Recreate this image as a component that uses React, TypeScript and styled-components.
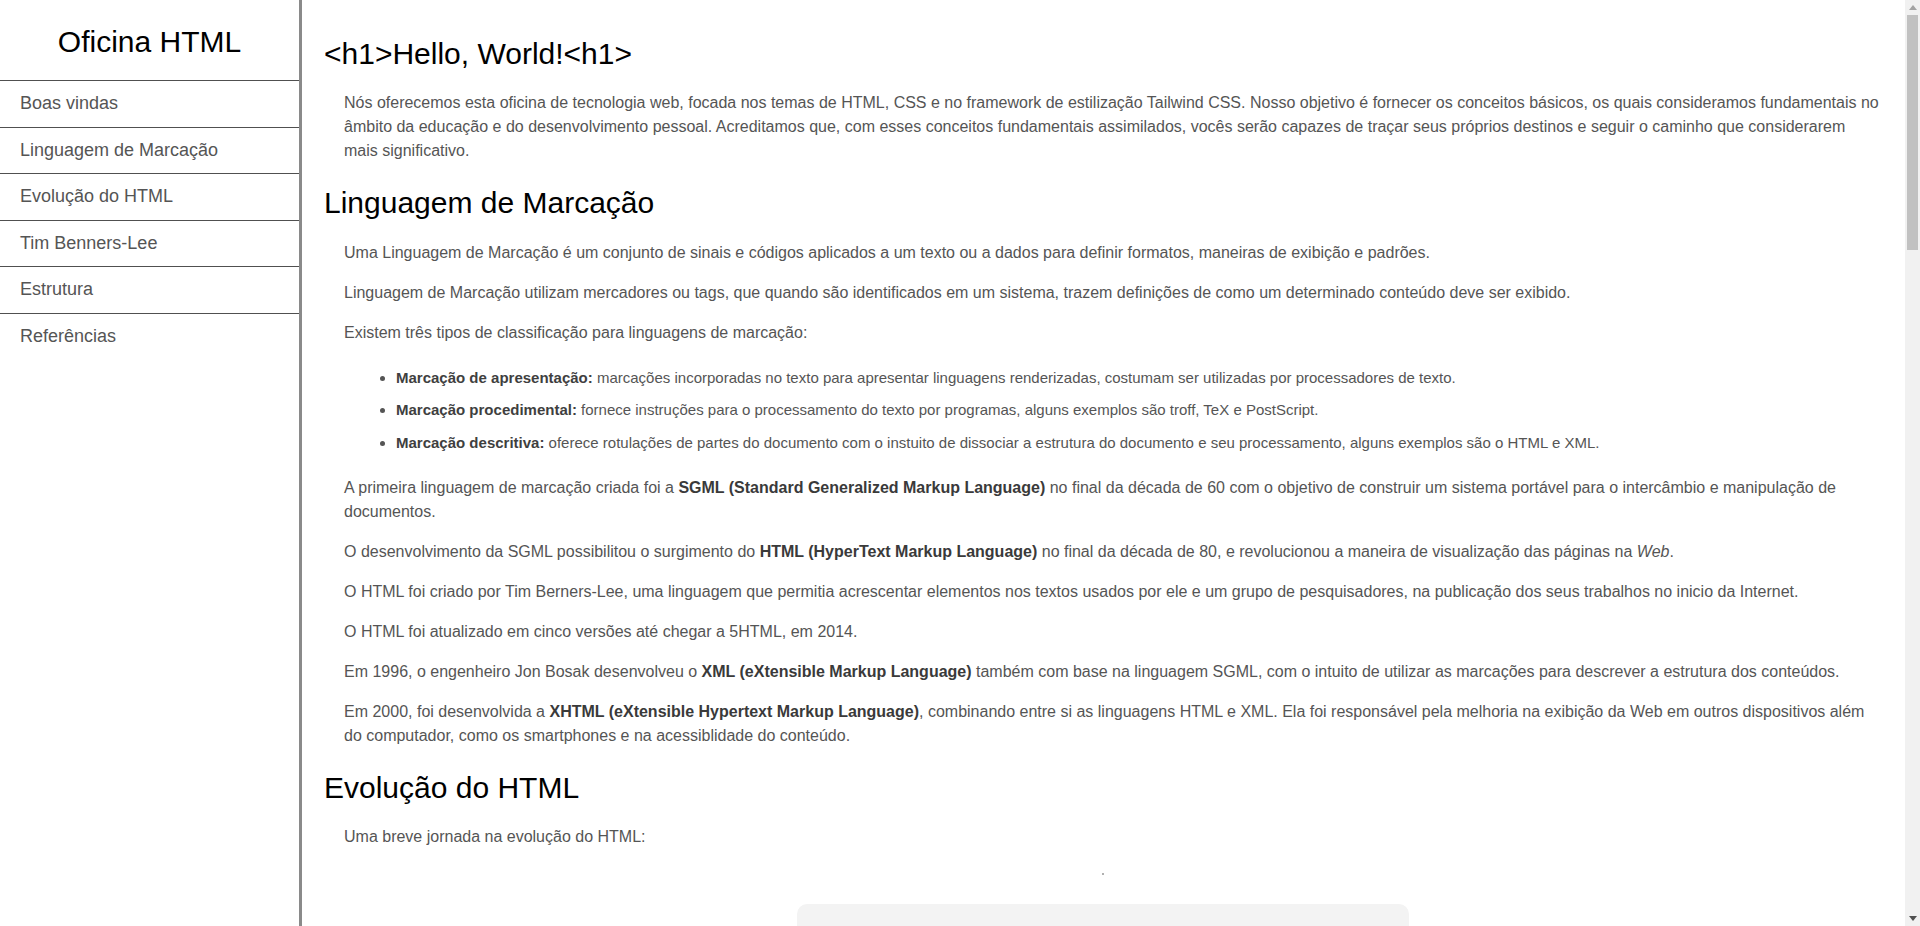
import React, { useEffect, useRef, useState } from "react";
import styled, { createGlobalStyle } from "styled-components";

const GlobalStyle = createGlobalStyle`
  *, *::before, *::after { box-sizing: border-box; }
  html, body { margin: 0; padding: 0; height: 100%; overflow: hidden; }
  body {
    font-family: "Liberation Sans", Arial, Helvetica, sans-serif;
    background: #ffffff;
    color: #555555;
  }
  #root { height: 100%; }
`;

const Layout = styled.div`
  display: flex;
  height: 100vh;
`;

const Sidebar = styled.aside`
  flex: 0 0 302px;
  width: 302px;
  height: 100%;
  border-right: 3px solid #8a8a8a;
  background: #ffffff;
`;

const Brand = styled.div`
  padding: 24px 0 20px;
  font-size: 30px;
  line-height: 36px;
  text-align: center;
  color: #000000;
`;

const Nav = styled.nav`
  display: flex;
  flex-direction: column;
`;

const NavLink = styled.a`
  display: block;
  border-top: 1px solid #505050;
  padding: 9px 20px;
  font-size: 18px;
  line-height: 27.6px;
  color: #555555;
  text-decoration: none;
`;

const Main = styled.main`
  flex: 1;
  min-width: 0;
  height: 100%;
  overflow-y: auto;
  padding: 14px 23px 110px 22px;
  scrollbar-width: none;

  &::-webkit-scrollbar {
    display: none;
  }
`;

const ScrollRail = styled.div`
  flex: 0 0 15px;
  width: 15px;
  height: 100%;
  display: flex;
  flex-direction: column;
  background: #f1f1f1;
`;

const ScrollButton = styled.div`
  flex: 0 0 15px;
  height: 15px;
  display: flex;
  align-items: center;
  justify-content: center;
`;

const ScrollTrack = styled.div`
  flex: 1;
  display: flex;
  flex-direction: column;
  padding: 0 2px;
`;

const ScrollThumb = styled.div`
  flex: 0 0 auto;
  width: 100%;
  background: #c1c1c1;
`;

const Heading = styled.h2`
  margin: 22px 0 19.4px;
  font-size: 30px;
  line-height: 36px;
  font-weight: 400;
  color: #000000;
`;

const Text = styled.p`
  margin: 16px 0 16px 20px;
  font-size: 16px;
  line-height: 24px;
  color: #555555;

  strong {
    color: #3a3a3a;
    font-weight: 700;
  }
`;

const List = styled.ul`
  margin: 21px 0 21px 20px;
  padding-left: 52px;
  list-style: disc;
`;

const Item = styled.li`
  font-size: 15px;
  line-height: 24px;
  color: #555555;

  & + & {
    margin-top: 8.6px;
  }

  strong {
    color: #3f3f3f;
    font-weight: 700;
  }
`;

const Timeline = styled.section`
  margin-top: 16px;
  padding-top: 8px;
  display: flex;
  flex-direction: column;
  align-items: center;
`;

const Dot = styled.span`
  display: block;
  width: 2px;
  height: 2px;
  background: #b0b0b0;
`;

const Card = styled.div`
  margin-top: 29px;
  width: 612px;
  border-radius: 10px;
  background: #f3f3f3;
  padding: 32px 36px;
  display: flex;
  flex-direction: column;
  gap: 18px;
`;

const Year = styled.div`
  font-size: 22px;
  line-height: 30px;
  color: #222222;
  font-weight: 700;
`;

const CardText = styled.p`
  margin: 0;
  font-size: 16px;
  line-height: 24px;
  color: #555555;
`;

const Code = styled.pre`
  margin: 16px 0 16px 20px;
  padding: 16px 20px;
  background: #f3f3f3;
  border-radius: 8px;
  font-family: "Liberation Mono", "Courier New", monospace;
  font-size: 14px;
  line-height: 22px;
  color: #333333;
`;

const navItems = [
  "Boas vindas",
  "Linguagem de Marcação",
  "Evolução do HTML",
  "Tim Benners-Lee",
  "Estrutura",
  "Referências",
];

const timeline = [
  { year: "1991", text: "Tim Berners-Lee publica a primeira descrição do HTML, com 18 elementos." },
  { year: "1993", text: "O navegador Mosaic populariza a Web e a exibição de imagens." },
  { year: "1995", text: "HTML 2.0 é publicado como a primeira especificação padronizada." },
  { year: "1997", text: "HTML 3.2 é publicado pelo W3C, com suporte a tabelas." },
  { year: "1999", text: "HTML 4.01 introduz folhas de estilo e scripts." },
  { year: "2000", text: "XHTML 1.0 combina as linguagens HTML e XML." },
  { year: "2008", text: "Primeiro rascunho público do HTML5." },
  { year: "2014", text: "HTML5 se torna recomendação oficial do W3C." },
  { year: "2016", text: "HTML 5.1 é publicado pelo W3C." },
  { year: "2019", text: "O HTML Living Standard do WHATWG se torna a referência oficial." },
];

const semanticTags = [
  ["<header>", "cabeçalho da página ou de uma seção."],
  ["<nav>", "conjunto de links de navegação."],
  ["<main>", "conteúdo principal do documento."],
  ["<section>", "agrupamento temático de conteúdo."],
  ["<article>", "conteúdo independente e autossuficiente."],
  ["<aside>", "conteúdo relacionado, como barras laterais."],
  ["<footer>", "rodapé da página ou de uma seção."],
];

function Arrow({ up, color }: { up: boolean; color: string }) {
  return (
    <svg width="8" height="5" viewBox="0 0 8 5" aria-hidden="true">
      <polygon points={up ? "4,0 8,5 0,5" : "0,0 8,0 4,5"} fill={color} />
    </svg>
  );
}

export default function App() {
  const mainRef = useRef<HTMLElement>(null);
  const trackRef = useRef<HTMLDivElement>(null);
  const [thumb, setThumb] = useState({ top: 0, height: 234 });

  useEffect(() => {
    const main = mainRef.current;
    const track = trackRef.current;
    if (!main || !track) return;
    const update = () => {
      const trackLen = track.clientHeight;
      const ratio = main.clientHeight / Math.max(main.scrollHeight, 1);
      const height = Math.max(Math.round(trackLen * ratio), 20);
      const max = main.scrollHeight - main.clientHeight;
      const top = max > 0 ? ((trackLen - height) * main.scrollTop) / max : 0;
      setThumb({ top, height });
    };
    update();
    main.addEventListener("scroll", update);
    window.addEventListener("resize", update);
    return () => {
      main.removeEventListener("scroll", update);
      window.removeEventListener("resize", update);
    };
  }, []);

  return (
    <>
      <GlobalStyle />
      <Layout>
        <Sidebar>
          <Brand>Oficina HTML</Brand>
          <Nav>
            {navItems.map((item) => (
              <NavLink key={item} href="#">
                {item}
              </NavLink>
            ))}
          </Nav>
        </Sidebar>
        <Main ref={mainRef}>
          <Heading as="h1">&lt;h1&gt;Hello, World!&lt;h1&gt;</Heading>
          <Text>
            Nós oferecemos esta oficina de tecnologia web, focada nos temas de HTML, CSS e no framework de
            estilização Tailwind CSS. Nosso objetivo é fornecer os conceitos básicos, os quais consideramos
            fundamentais no âmbito da educação e do desenvolvimento pessoal. Acreditamos que, com esses conceitos
            fundamentais assimilados, vocês serão capazes de traçar seus próprios destinos e seguir o caminho que
            considerarem mais significativo.
          </Text>

          <Heading>Linguagem de Marcação</Heading>
          <Text>
            Uma Linguagem de Marcação é um conjunto de sinais e códigos aplicados a um texto ou a dados para definir
            formatos, maneiras de exibição e padrões.
          </Text>
          <Text>
            Linguagem de Marcação utilizam mercadores ou tags, que quando são identificados em um sistema, trazem
            definições de como um determinado conteúdo deve ser exibido.
          </Text>
          <Text>Existem três tipos de classificação para linguagens de marcação:</Text>
          <List>
            <Item>
              <strong>Marcação de apresentação:</strong> marcações incorporadas no texto para apresentar linguagens
              renderizadas, costumam ser utilizadas por processadores de texto.
            </Item>
            <Item>
              <strong>Marcação procedimental:</strong> fornece instruções para o processamento do texto por
              programas, alguns exemplos são troff, TeX e PostScript.
            </Item>
            <Item>
              <strong>Marcação descritiva:</strong> oferece rotulações de partes do documento com o instuito de
              dissociar a estrutura do documento e seu processamento, alguns exemplos são o HTML e XML.
            </Item>
          </List>
          <Text>
            A primeira linguagem de marcação criada foi a <strong>SGML (Standard Generalized Markup Language)</strong>{" "}
            no final da década de 60 com o objetivo de construir um sistema portável para o intercâmbio e manipulação
            de documentos.
          </Text>
          <Text>
            O desenvolvimento da SGML possibilitou o surgimento do <strong>HTML (HyperText Markup Language)</strong> no
            final da década de 80, e revolucionou a maneira de visualização das páginas na <em>Web</em>.
          </Text>
          <Text>
            O HTML foi criado por Tim Berners-Lee, uma linguagem que permitia acrescentar elementos nos textos usados
            por ele e um grupo de pesquisadores, na publicação dos seus trabalhos no inicio da Internet.
          </Text>
          <Text>O HTML foi atualizado em cinco versões até chegar a 5HTML, em 2014.</Text>
          <Text>
            Em 1996, o engenheiro Jon Bosak desenvolveu o <strong>XML (eXtensible Markup Language)</strong> também com
            base na linguagem SGML, com o intuito de utilizar as marcações para descrever a estrutura dos conteúdos.
          </Text>
          <Text>
            Em 2000, foi desenvolvida a <strong>XHTML (eXtensible Hypertext Markup Language)</strong>, combinando entre
            si as linguagens HTML e XML. Ela foi responsável pela melhoria na exibição da Web em outros dispositivos
            além do computador, como os smartphones e na acessiblidade do conteúdo.
          </Text>

          <Heading>Evolução do HTML</Heading>
          <Text>Uma breve jornada na evolução do HTML:</Text>
          <Timeline>
            <Dot />
            <Card>
              {timeline.map((t) => (
                <div key={t.year}>
                  <Year>{t.year}</Year>
                  <CardText>{t.text}</CardText>
                </div>
              ))}
            </Card>
          </Timeline>

          <Heading>Tim Benners-Lee</Heading>
          <Text>
            Tim Berners-Lee é um físico e cientista da computação britânico, conhecido como o criador da World Wide
            Web. Em 1989, enquanto trabalhava no CERN, propôs um sistema de gerenciamento de informações baseado em
            hipertexto.
          </Text>
          <Text>
            Em 1990, desenvolveu o primeiro navegador e o primeiro servidor web, além de definir as bases do HTML, do
            HTTP e das URLs.
          </Text>
          <Text>
            Em 1994, fundou o World Wide Web Consortium (W3C), organização responsável por desenvolver os padrões
            da Web.
          </Text>
          <Text>
            Em 2004, recebeu o título de cavaleiro da rainha Elizabeth II, e em 2016 foi agraciado com o Prêmio
            Turing pela invenção da World Wide Web.
          </Text>

          <Heading>Estrutura</Heading>
          <Text>Todo documento HTML possui uma estrutura básica, composta pelos seguintes elementos:</Text>
          <Code>{`<!DOCTYPE html>
<html lang="pt-BR">
  <head>
    <meta charset="UTF-8">
    <title>Oficina HTML</title>
  </head>
  <body>
    <h1>Hello, World!</h1>
  </body>
</html>`}</Code>
          <List>
            <Item>
              <strong>&lt;!DOCTYPE html&gt;:</strong> informa ao navegador a versão do HTML utilizada.
            </Item>
            <Item>
              <strong>&lt;html&gt;:</strong> elemento raiz que envolve todo o conteúdo da página.
            </Item>
            <Item>
              <strong>&lt;head&gt;:</strong> contém metadados, como o título e a codificação de caracteres.
            </Item>
            <Item>
              <strong>&lt;body&gt;:</strong> contém todo o conteúdo visível da página.
            </Item>
          </List>
          <Text>Para organizar o conteúdo do corpo da página, o HTML5 oferece elementos semânticos:</Text>
          <List>
            {semanticTags.map(([tag, desc]) => (
              <Item key={tag}>
                <strong>{tag}:</strong> {desc}
              </Item>
            ))}
          </List>
          <Text>Um exemplo de página organizada com elementos semânticos:</Text>
          <Code>{`<body>
  <header>
    <nav>...</nav>
  </header>
  <main>
    <section>
      <article>
        <h2>Título do artigo</h2>
        <p>Conteúdo do artigo.</p>
      </article>
    </section>
    <aside>...</aside>
  </main>
  <footer>...</footer>
</body>`}</Code>

          <Heading>Referências</Heading>
          <List>
            <Item>MDN Web Docs. HTML: Linguagem de Marcação de Hipertexto.</Item>
            <Item>W3C. HTML Living Standard.</Item>
            <Item>WHATWG. HTML Standard.</Item>
            <Item>Tailwind CSS. Documentação oficial.</Item>
            <Item>BERNERS-LEE, Tim. Weaving the Web. HarperCollins, 1999.</Item>
            <Item>W3Schools. HTML Tutorial.</Item>
          </List>
        </Main>
        <ScrollRail aria-hidden="true">
          <ScrollButton>
            <Arrow up color="#a3a3a3" />
          </ScrollButton>
          <ScrollTrack ref={trackRef}>
            <ScrollThumb style={{ marginTop: thumb.top, height: thumb.height }} />
          </ScrollTrack>
          <ScrollButton>
            <Arrow up={false} color="#505050" />
          </ScrollButton>
        </ScrollRail>
      </Layout>
    </>
  );
}
